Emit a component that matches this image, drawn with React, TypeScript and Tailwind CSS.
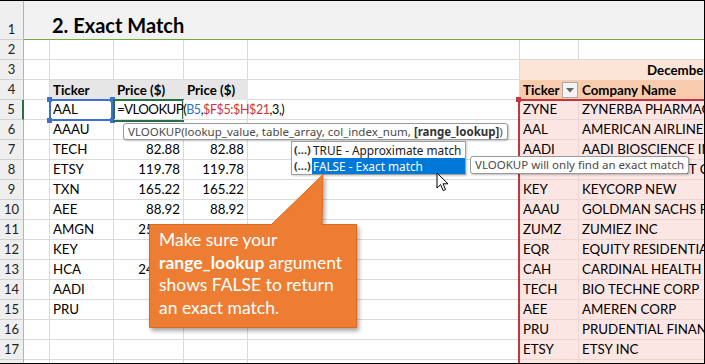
import React from 'react';

const colW = ['w-[24px]', 'w-[26px]', 'w-[64px]', 'w-[70px]', 'w-[64px]', 'w-[272px]', 'w-[59px]', 'w-[125px]'];

type Row = {
  n: number;
  b?: string;
  c?: string;
  d?: string;
  f?: string;
  g?: string;
};

const rows: Row[] = [
  { n: 6, b: 'AAAU', f: 'AAL', g: 'AMERICAN AIRLINES GROUP' },
  { n: 7, b: 'TECH', c: '82.88', d: '82.88', f: 'AADI', g: 'AADI BIOSCIENCE INC' },
  { n: 8, b: 'ETSY', c: '119.78', d: '119.78', f: 'CHD', g: 'CHURCH DWIGHT CO' },
  { n: 9, b: 'TXN', c: '165.22', d: '165.22', f: 'KEY', g: 'KEYCORP NEW' },
  { n: 10, b: 'AEE', c: '88.92', d: '88.92', f: 'AAAU', g: 'GOLDMAN SACHS PHYSICAL GOLD' },
  { n: 11, b: 'AMGN', c: '255.22', d: '255.22', f: 'ZUMZ', g: 'ZUMIEZ INC' },
  { n: 12, b: 'KEY', f: 'EQR', g: 'EQUITY RESIDENTIAL' },
  { n: 13, b: 'HCA', c: '241.35', d: '241.35', f: 'CAH', g: 'CARDINAL HEALTH INC' },
  { n: 14, b: 'AADI', f: 'TECH', g: 'BIO TECHNE CORP' },
  { n: 15, b: 'PRU', f: 'AEE', g: 'AMEREN CORP' },
  { n: 16, f: 'PRU', g: 'PRUDENTIAL FINANCIAL INC' },
  { n: 17, f: 'ETSY', g: 'ETSY INC' },
];

const grid = 'border-r border-b border-[#dadada]';
const pink = 'border-r border-b border-[#ecd6d4] bg-[#fbe6e4]';
const txt = 'flex items-end pb-[1px] px-[3px] whitespace-nowrap overflow-hidden leading-[17px]';

function RowHead({ n, active }: { n: number | string; active?: boolean }) {
  return (
    <div
      className={`${colW[0]} shrink-0 bg-[#efefef] border-b border-[#d0d0d0] border-r ${
        active ? 'border-r-2 border-r-[#217346]' : 'border-r-[#b4b4b4]'
      } flex items-end justify-center pb-[1px] text-[13px] leading-[17px] text-[#222]`}
    >
      {n}
    </div>
  );
}

function DataRow({ r }: { r: Row }) {
  return (
    <div className="flex h-[20px]">
      <RowHead n={r.n} />
      <div className={`${colW[1]} shrink-0 ${grid}`} />
      <div className={`${colW[2]} shrink-0 ${grid} ${txt}`}>{r.b}</div>
      <div className={`${colW[3]} shrink-0 ${grid} ${txt} justify-end`}>{r.c}</div>
      <div className={`${colW[4]} shrink-0 ${grid} ${txt} justify-end`}>{r.d}</div>
      <div className={`${colW[5]} shrink-0 ${grid}`} />
      <div className={`${colW[6]} shrink-0 ${pink} ${txt}`}>{r.f}</div>
      <div className={`${colW[7]} shrink-0 ${pink} ${txt} border-r-0`}>{r.g}</div>
    </div>
  );
}

function EmptyRow({ n }: { n: number | string }) {
  return (
    <div className="flex h-[20px]">
      <RowHead n={n} />
      <div className={`${colW[1]} shrink-0 ${grid}`} />
      <div className={`${colW[2]} shrink-0 ${grid}`} />
      <div className={`${colW[3]} shrink-0 ${grid}`} />
      <div className={`${colW[4]} shrink-0 ${grid}`} />
      <div className={`${colW[5]} shrink-0 ${grid}`} />
      <div className={`${colW[6]} shrink-0 ${grid}`} />
      <div className={`${colW[7]} shrink-0 ${grid} border-r-0`} />
    </div>
  );
}

function Cursor() {
  return (
    <svg className="absolute left-[436px] top-[171px]" width="14" height="21" viewBox="0 0 14 21">
      <path
        d="M1 1 L1 16 L4.6 12.6 L7.2 18.6 L9.6 17.6 L7 11.8 L12 11.8 Z"
        fill="#fff"
        stroke="#000"
        strokeWidth="1"
        strokeLinejoin="round"
      />
    </svg>
  );
}

function Callout() {
  return (
    <div className="absolute left-[147px] top-[171px] w-[216px] h-[164px]">
      <svg width="216" height="164" viewBox="0 0 216 164" className="absolute inset-0">
        <defs>
          <filter id="sh" x="-10%" y="-10%" width="130%" height="130%">
            <feDropShadow dx="2" dy="3" stdDeviation="2" floodColor="#000" floodOpacity="0.35" />
          </filter>
        </defs>
        <path
          d="M2.5 52.5 H124.5 L176 2.5 L175 52.5 H209.5 V155.5 H2.5 Z"
          fill="#ed7d31"
          stroke="#d8671f"
          strokeWidth="1"
          filter="url(#sh)"
        />
      </svg>
      <div className="absolute left-[12px] top-[57px] text-white text-[17.5px] leading-[22.5px] font-['Lato',sans-serif]">
        <div>Make sure your</div>
        <div>
          <span className="font-bold">range_lookup</span> argument
        </div>
        <div>shows FALSE to return</div>
        <div>an exact match.</div>
      </div>
    </div>
  );
}

export default function App() {
  return (
    <div className="relative w-[705px] h-[364px] overflow-hidden bg-white border-t border-r border-b border-black font-['Lato',sans-serif] text-[13.3px] text-black">
      {/* row 1 */}
      <div className="flex h-[39px]">
        <RowHead n={1} />
        <div className="flex-1 bg-[#f2f2f2] border-b border-[#70ad47] flex items-end pl-[28px] pb-[2px]">
          <span className="font-bold text-[20px] leading-[24px]">2. Exact Match</span>
        </div>
      </div>
      <EmptyRow n={2} />
      {/* row 3 */}
      <div className="flex h-[20px]">
        <RowHead n={3} />
        <div className={`${colW[1]} shrink-0 ${grid}`} />
        <div className={`${colW[2]} shrink-0 ${grid}`} />
        <div className={`${colW[3]} shrink-0 ${grid}`} />
        <div className={`${colW[4]} shrink-0 ${grid}`} />
        <div className={`${colW[5]} shrink-0 ${grid}`} />
        <div className="flex-1 bg-[#fce4d6] flex items-end pb-[1px] pl-[127px] font-bold leading-[17px] whitespace-nowrap overflow-hidden">
          December 2022
        </div>
      </div>
      {/* row 4 */}
      <div className="flex h-[20px]">
        <RowHead n={4} />
        <div className={`${colW[1]} shrink-0 ${grid}`} />
        <div className={`${colW[2]} shrink-0 bg-[#e6e6e6] ${txt} font-bold`}>Ticker</div>
        <div className={`${colW[3]} shrink-0 bg-[#e6e6e6] ${txt} font-bold`}>Price ($)</div>
        <div className={`${colW[4]} shrink-0 bg-[#e6e6e6] ${txt} font-bold`}>Price ($)</div>
        <div className={`${colW[5]} shrink-0 ${grid}`} />
        <div className={`${colW[6]} shrink-0 bg-[#f8cbad] ${txt} font-bold relative`}>
          Ticker
          <div className="absolute right-[1px] top-[2px] w-[16px] h-[16px] bg-[#f3f3f3] border border-[#a9a9a9] flex items-center justify-center">
            <svg width="8" height="5" viewBox="0 0 8 5">
              <path d="M0 0 H8 L4 4.5 Z" fill="#666" />
            </svg>
          </div>
        </div>
        <div className={`${colW[7]} shrink-0 bg-[#f8cbad] ${txt} font-bold`}>Company Name</div>
      </div>
      {/* row 5 */}
      <div className="flex h-[20px]">
        <RowHead n={5} active />
        <div className={`${colW[1]} shrink-0 ${grid}`} />
        <div className={`${colW[2]} shrink-0 ${grid} ${txt}`}>AAL</div>
        <div className={`${colW[3]} shrink-0 ${grid} flex items-end pb-[1px] pl-[3px] leading-[17px] whitespace-nowrap relative z-30`}>
          <span className="tracking-[-0.6px]">=VLOOKUP(</span>
          <span className="text-[12.5px] tracking-[-0.4px]">
            <span className="text-[#2f6fc6]">B5</span>,<span className="text-[#d13438]">$F$5:$H$21</span>,3,)
          </span>
        </div>
        <div className={`${colW[4]} shrink-0 ${grid}`} />
        <div className={`${colW[5]} shrink-0 ${grid}`} />
        <div className={`${colW[6]} shrink-0 ${pink} ${txt}`}>ZYNE</div>
        <div className={`${colW[7]} shrink-0 ${pink} ${txt} border-r-0`}>ZYNERBA PHARMACEUTICALS</div>
      </div>
      {rows.map((r) => (
        <DataRow key={r.n} r={r} />
      ))}
      <DataRow r={{ n: 18 }} />

      {/* reference highlight: B5 blue */}
      <div className="absolute left-[49px] top-[98px] w-[64px] h-[22px] border-2 border-[#3f6fcf] z-20" />
      <div className="absolute left-[47px] top-[96px] w-[5px] h-[5px] bg-[#3f6fcf] z-20" />
      <div className="absolute left-[110px] top-[96px] w-[5px] h-[5px] bg-[#3f6fcf] z-20" />
      <div className="absolute left-[47px] top-[117px] w-[5px] h-[5px] bg-[#3f6fcf] z-20" />
      <div className="absolute left-[110px] top-[117px] w-[5px] h-[5px] bg-[#3f6fcf] z-20" />
      {/* active cell C5 */}
      <div className="absolute left-[113px] top-[98px] w-[71px] h-[23px] border-2 border-[#217346] z-20" />
      {/* table_array red */}
      <div className="absolute left-[518px] top-[98px] w-[200px] h-[280px] border-l-2 border-t-2 border-[#c3363d] z-20" />
      <div className="absolute left-[516px] top-[96px] w-[5px] h-[5px] bg-[#c3363d] z-20" />

      {/* function tooltip */}
      <div className="absolute left-[123px] top-[122px] h-[17px] px-[4px] bg-white border border-[#9a9a9a] rounded-[3px] shadow-[1px_1px_2px_rgba(0,0,0,0.25)] z-40 flex items-center font-['Noto_Sans',sans-serif] text-[11.5px] text-[#4a4a4a] whitespace-nowrap leading-[15px]">
        VLOOKUP(lookup_value, table_array, col_index_num,&nbsp;<span className="font-bold text-[#333]">[range_lookup]</span>)
      </div>

      {/* dropdown */}
      <div className="absolute left-[291px] top-[140px] w-[175px] h-[34px] bg-white border border-[#a0a0a0] z-40 flex flex-col font-['Noto_Sans',sans-serif] text-[11.8px] leading-[16px] whitespace-nowrap shadow-[1px_1px_2px_rgba(0,0,0,0.2)]">
        <div className="flex h-[16px]">
          <span className="w-[20px] shrink-0 pl-[2px] text-[11px] font-bold text-[#333]">(...)</span>
          <span className="pl-[1px] text-[#222]">TRUE - Approximate match</span>
        </div>
        <div className="flex h-[16px]">
          <span className="w-[20px] shrink-0 pl-[2px] text-[11px] font-bold text-[#333]">(...)</span>
          <span className="flex-1 bg-[#0078d7] text-white pl-[1px]">FALSE - Exact match</span>
        </div>
      </div>

      {/* description tooltip */}
      <div className="absolute left-[470px] top-[155px] h-[18px] px-[4px] bg-white border border-[#9a9a9a] rounded-[3px] shadow-[1px_1px_2px_rgba(0,0,0,0.25)] z-40 flex items-center font-['Noto_Sans',sans-serif] text-[11.5px] text-[#4a4a4a] whitespace-nowrap">
        VLOOKUP will only find an exact match
      </div>

      <div className="absolute inset-0 z-50 pointer-events-none">
        <Callout />
        <Cursor />
      </div>
    </div>
  );
}
